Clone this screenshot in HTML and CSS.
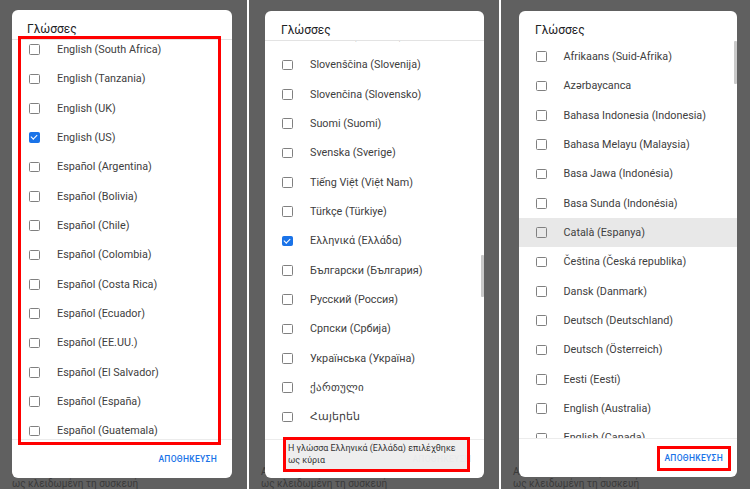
FILE: index.html
```html
<!DOCTYPE html>
<html lang="el">
<head>
    <meta charset="UTF-8">
    <meta name="viewport" content="width=device-width, initial-scale=1.0">
    <title>Γλώσσες</title>
    <link rel="stylesheet" href="styles.css">
</head>
<body>
    <div class="screens">
        <!-- Écran 1 -->
        <section class="screen screen-1">
            <div class="page-text">Αυτό το σημείο εμφανίζεται<br>ως κλειδωμένη τη συσκευή</div>
            <div class="dialog">
                <div class="dialog-title divided">Γλώσσες</div>
                <div class="dialog-list">
                    <ul class="lang-list">
                        <li class="lang"><span class="box"></span>English (South Africa)</li>
                        <li class="lang"><span class="box"></span>English (Tanzania)</li>
                        <li class="lang"><span class="box"></span>English (UK)</li>
                        <li class="lang"><span class="box checked"></span>English (US)</li>
                        <li class="lang"><span class="box"></span>Español (Argentina)</li>
                        <li class="lang"><span class="box"></span>Español (Bolivia)</li>
                        <li class="lang"><span class="box"></span>Español (Chile)</li>
                        <li class="lang"><span class="box"></span>Español (Colombia)</li>
                        <li class="lang"><span class="box"></span>Español (Costa Rica)</li>
                        <li class="lang"><span class="box"></span>Español (Ecuador)</li>
                        <li class="lang"><span class="box"></span>Español (EE.UU.)</li>
                        <li class="lang"><span class="box"></span>Español (El Salvador)</li>
                        <li class="lang"><span class="box"></span>Español (España)</li>
                        <li class="lang"><span class="box"></span>Español (Guatemala)</li>
                        <li class="lang"><span class="box"></span>Español (Honduras)</li>
                    </ul>
                </div>
                <div class="dialog-actions">
                    <button class="save">ΑΠΟΘΗΚΕΥΣΗ</button>
                </div>
            </div>
            <div class="mark mark-list"></div>
        </section>

        <!-- Écran 2 -->
        <section class="screen screen-2">
            <div class="page-text">Αυτό το σημείο εμφανίζεται<br>ως κλειδωμένη τη συσκευή</div>
            <div class="dialog">
                <div class="dialog-title divided">Γλώσσες</div>
                <div class="dialog-list">
                    <ul class="lang-list">
                        <li class="lang"><span class="box"></span>Română (România)</li>
                        <li class="lang"><span class="box"></span>Slovenščina (Slovenija)</li>
                        <li class="lang"><span class="box"></span>Slovenčina (Slovensko)</li>
                        <li class="lang"><span class="box"></span>Suomi (Suomi)</li>
                        <li class="lang"><span class="box"></span>Svenska (Sverige)</li>
                        <li class="lang"><span class="box"></span>Tiếng Việt (Việt Nam)</li>
                        <li class="lang"><span class="box"></span>Türkçe (Türkiye)</li>
                        <li class="lang"><span class="box checked"></span>Ελληνικά (Ελλάδα)</li>
                        <li class="lang"><span class="box"></span>Български (България)</li>
                        <li class="lang"><span class="box"></span>Русский (Россия)</li>
                        <li class="lang"><span class="box"></span>Српски (Србија)</li>
                        <li class="lang"><span class="box"></span>Українська (Україна)</li>
                        <li class="lang"><span class="box"></span>ქართული</li>
                        <li class="lang"><span class="box"></span>Հայերեն</li>
                        <li class="lang"><span class="box"></span>עברית</li>
                    </ul>
                    <div class="scrollbar"></div>
                </div>
                <div class="dialog-actions">
                    <button class="save">ΑΠΟΘΗΚΕΥΣΗ</button>
                </div>
            </div>
            <div class="snackbar">Η γλώσσα Ελληνικά (Ελλάδα) επιλέχθηκε<br>ως κύρια</div>
        </section>

        <!-- Écran 3 -->
        <section class="screen screen-3">
            <div class="page-text">Αυτό το σημείο εμφανίζεται<br>ως κλειδωμένη τη συσκευή</div>
            <div class="dialog">
                <div class="dialog-title">Γλώσσες</div>
                <div class="dialog-list">
                    <ul class="lang-list">
                        <li class="lang"><span class="box"></span>Afrikaans (Suid-Afrika)</li>
                        <li class="lang"><span class="box"></span>Azərbaycanca</li>
                        <li class="lang"><span class="box"></span>Bahasa Indonesia (Indonesia)</li>
                        <li class="lang"><span class="box"></span>Bahasa Melayu (Malaysia)</li>
                        <li class="lang"><span class="box"></span>Basa Jawa (Indonésia)</li>
                        <li class="lang"><span class="box"></span>Basa Sunda (Indonésia)</li>
                        <li class="lang pressed"><span class="box"></span>Català (Espanya)</li>
                        <li class="lang"><span class="box"></span>Čeština (Česká republika)</li>
                        <li class="lang"><span class="box"></span>Dansk (Danmark)</li>
                        <li class="lang"><span class="box"></span>Deutsch (Deutschland)</li>
                        <li class="lang"><span class="box"></span>Deutsch (Österreich)</li>
                        <li class="lang"><span class="box"></span>Eesti (Eesti)</li>
                        <li class="lang"><span class="box"></span>English (Australia)</li>
                        <li class="lang"><span class="box"></span>English (Canada)</li>
                    </ul>
                    <div class="scrollbar"></div>
                </div>
                <div class="dialog-actions divided">
                    <button class="save">ΑΠΟΘΗΚΕΥΣΗ</button>
                </div>
            </div>
            <div class="mark mark-save"></div>
        </section>
    </div>
</body>
</html>
```

FILE: styles.css
```css
/* Réinitialisation */
* {
    margin: 0;
    padding: 0;
    box-sizing: border-box;
}

body {
    background: #ffffff;
    font-family: Roboto, 'Noto Sans', sans-serif;
    width: 750px;
    height: 489px;
    overflow: hidden;
}

/* Trois captures côte à côte */
.screens {
    display: flex;
    gap: 2px;
    height: 489px;
}

.screen {
    position: relative;
    height: 489px;
    background: #606060;
    overflow: hidden;
}

.screen-1 {
    width: 247px;
    padding: 10px 0 0 12px;
}

.screen-2 {
    width: 250px;
    padding: 11px 0 0 16px;
}

.screen-3 {
    width: 249px;
    padding: 11px 0 0 18px;
}

/* Texte de la page derrière le voile */
.page-text {
    position: absolute;
    left: 12px;
    top: 466px;
    font-size: 10px;
    line-height: 12px;
    color: #3a3a3a;
}

/* Boîte de dialogue */
.dialog {
    position: relative;
    display: flex;
    flex-direction: column;
    width: 220px;
    height: 468px;
    background: #ffffff;
    border-radius: 6px;
    overflow: hidden;
}

.screen-2 .dialog {
    width: 219px;
    height: 467px;
}

.screen-3 .dialog {
    width: 218px;
    height: 466px;
}

.dialog-title {
    height: 30px;
    padding: 12px 0 0 15px;
    font-size: 12px;
    line-height: 14px;
    color: #202124;
    flex-shrink: 0;
}

.screen-2 .dialog-title,
.screen-3 .dialog-title {
    padding-left: 16px;
}

.dialog-title.divided {
    border-bottom: 1px solid #e3e3e3;
}

.dialog-list {
    position: relative;
    flex: 1;
    overflow: hidden;
}

.lang-list {
    list-style: none;
}

.screen-1 .lang-list {
    margin-top: -5px;
}

.screen-2 .lang-list {
    margin-top: -20px;
}

.screen-3 .lang-list {
    margin-top: 1px;
}

.lang {
    display: flex;
    align-items: center;
    height: 29.33px;
    padding-left: 17px;
    font-size: 10.8px;
    color: #404040;
    white-space: nowrap;
}

.lang.pressed {
    background: #e8e8e8;
}

/* Cases à cocher */
.box {
    position: relative;
    width: 10.5px;
    height: 10.5px;
    margin-right: 17.5px;
    border: 1.5px solid #808080;
    border-radius: 1.5px;
    flex-shrink: 0;
}

.screen-3 .box {
    margin-right: 17px;
}

.box.checked {
    background: #1a73e8;
    border-color: #1a73e8;
}

.box.checked::after {
    content: "";
    position: absolute;
    left: 2.4px;
    top: 0;
    width: 2.6px;
    height: 5.2px;
    border-right: 1.3px solid #ffffff;
    border-bottom: 1.3px solid #ffffff;
    transform: rotate(45deg);
}

.scrollbar {
    position: absolute;
    right: 0;
    width: 3px;
    background: #c9c9c9;
    border-radius: 1px;
}

.screen-2 .scrollbar {
    top: 214px;
    height: 42px;
}

.screen-3 .scrollbar {
    top: 0;
    height: 43px;
}

/* Actions */
.dialog-actions {
    display: flex;
    justify-content: flex-end;
    align-items: center;
    height: 39px;
    padding-right: 15px;
    border-top: 1px solid #ececec;
    flex-shrink: 0;
}

.screen-2 .dialog-actions {
    padding-right: 13px;
}

.save {
    background: none;
    border: none;
    font-family: Roboto, sans-serif;
    font-size: 8.5px;
    font-weight: 500;
    letter-spacing: 0.3px;
    color: #1a73e8;
}

.screen-2 .save {
    color: #c8d4e6;
}

.screen-3 .save {
    margin-right: -1px;
}

/* Snackbar */
.snackbar {
    position: absolute;
    left: 34px;
    top: 437px;
    width: 187px;
    height: 35px;
    padding: 2px 0 0 2px;
    background: rgba(236, 236, 236, 0.9);
    border: 3px solid #ff0000;
    font-size: 8.9px;
    line-height: 12px;
    color: #333333;
}

/* Annotations rouges */
.mark {
    position: absolute;
    border: 3px solid #ff0000;
}

.mark-list {
    left: 18px;
    top: 36px;
    width: 203px;
    height: 409px;
}

.mark-save {
    left: 156px;
    top: 446px;
    width: 74px;
    height: 25px;
}
```
